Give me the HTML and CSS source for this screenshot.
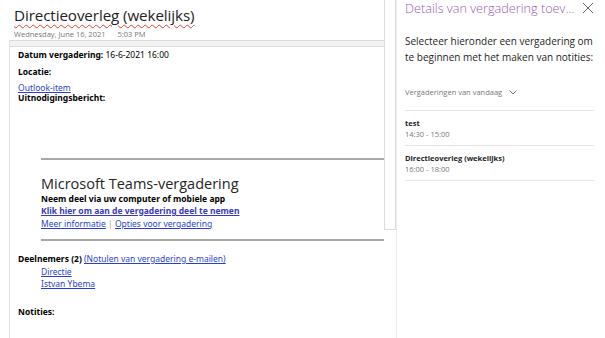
FILE: index.html
```html
<!DOCTYPE html>
<html lang="nl">
<head>
    <meta charset="UTF-8">
    <title>Directieoverleg (wekelijks)</title>
    <link rel="stylesheet" href="styles.css">
</head>
<body>
    <div class="note">
        <div class="note-head">
            <h1 class="note-title">Directieoverleg (wekelijks)</h1>
            <div class="note-date"><span>Wednesday, June 16, 2021</span><span>5:03 PM</span></div>
        </div>
        <div class="page">
            <div class="page-band"></div>
            <div class="page-body">
                <p class="row"><b>Datum vergadering:</b> 16-6-2021 16:00</p>
                <p class="row"><b>Locatie:</b></p>
                <p class="row tight"><a href="#">Outlook-item</a></p>
                <p class="row"><b>Uitnodigingsbericht:</b></p>

                <div class="invite">
                    <hr class="rule">
                    <h2 class="teams-title">Microsoft Teams-vergadering</h2>
                    <p class="teams-line"><b>Neem deel via uw computer of mobiele app</b></p>
                    <p class="teams-line"><a href="#" class="strong-link">Klik hier om aan de vergadering deel te nemen</a></p>
                    <p class="teams-line"><a href="#">Meer informatie</a> <span class="sep">|</span> <a href="#">Opties voor vergadering</a></p>
                    <hr class="rule lower">
                </div>

                <p class="row"><b>Deelnemers (2)</b> <a href="#">(Notulen van vergadering e-mailen)</a></p>
                <ul class="people">
                    <li><a href="#">Directie</a></li>
                    <li><a href="#">Istvan Ybema</a></li>
                </ul>
                <p class="row notes"><b>Notities:</b></p>
            </div>
        </div>
    </div>

    <div class="scroll-track"></div>

    <div class="panel">
        <div class="panel-head">
            <h2 class="panel-title">Details van vergadering toev...</h2>
            <svg class="close" width="12" height="12" viewBox="0 0 12 12"><path d="M1 1 L11 11 M11 1 L1 11" stroke="#666" stroke-width="1" fill="none"/></svg>
        </div>
        <p class="panel-intro">Selecteer hieronder een vergadering om te beginnen met het maken van notities:</p>
        <div class="filter">Vergaderingen van vandaag
            <svg width="8" height="5" viewBox="0 0 8 5"><path d="M0.5 0.5 L4 4 L7.5 0.5" stroke="#777" stroke-width="1" fill="none"/></svg>
        </div>
        <ul class="meetings">
            <li><div class="m-name">test</div><div class="m-time">14:30 - 15:00</div></li>
            <li><div class="m-name">Directieoverleg (wekelijks)</div><div class="m-time">16:00 - 18:00</div></li>
        </ul>
    </div>
</body>
</html>
```

FILE: styles.css
```css
html, body {
    margin: 0;
    padding: 0;
}
body {
    width: 605px;
    height: 338px;
    overflow: hidden;
    display: flex;
    background: #fff;
    font-family: "Open Sans", "Noto Sans", sans-serif;
    color: #000;
}
a {
    color: #2a3fd0;
}
p {
    margin: 0;
}
.note {
    flex: 0 0 384px;
    display: flex;
    flex-direction: column;
}
.note-head {
    padding: 4px 0 0 14px;
    height: 36px;
}
.note-title {
    margin: 0;
    display: inline-block;
    font-size: 15.2px;
    font-weight: 400;
    letter-spacing: -0.1px;
    line-height: 22px;
    color: #222;
    text-decoration: underline wavy #e04040;
    text-decoration-thickness: 1px;
    text-underline-offset: 3px;
}
.note-date {
    margin-top: 3px;
    font-size: 7.5px;
    color: #777;
    display: flex;
    gap: 12px;
}
.page {
    flex: 1;
    margin-left: 9px;
    border-left: 1px solid #e3e3e3;
}
.page-band {
    height: 5px;
    background: #f2f2f2;
    border-top: 1px solid #dcdcdc;
    border-bottom: 1px solid #dcdcdc;
}
.page-body {
    padding: 3px 0 0 8px;
    font-family: "Noto Sans", sans-serif;
    font-size: 8.5px;
    line-height: 10px;
}
.row {
    margin-bottom: 6.5px;
}
.row.tight {
    margin-bottom: 0;
}
.invite {
    padding: 48px 0 0 23px;
}
.rule {
    margin: 0;
    border: 0;
    border-top: 2px solid #a8a8a8;
}
.rule.lower {
    margin-top: 9px;
    margin-bottom: 13px;
}
.teams-title {
    margin: 15px 0 0;
    font-family: "Open Sans", sans-serif;
    font-size: 14.5px;
    font-weight: 400;
    line-height: 18px;
    color: #252424;
}
.teams-line {
    line-height: 12.5px;
}
.strong-link {
    font-weight: 700;
    color: #3b3bb8;
}
.sep {
    color: #999;
}
.people {
    list-style: none;
    margin: -5px 0 0;
    padding: 0 0 0 23px;
    line-height: 12px;
}
.notes {
    margin-top: 17px;
}
.scroll-track {
    flex: 0 0 10px;
    height: 229px;
    border: 1px solid #dcdcdc;
    border-top: 0;
    background: #fff;
}
.panel {
    flex: 1;
    border-left: 1px solid #ececec;
    padding: 0 11px 0 8px;
}
.panel-head {
    display: flex;
    justify-content: space-between;
    align-items: center;
    height: 20px;
    margin-top: -2px;
}
.panel-title {
    margin: 0;
    font-size: 12.7px;
    font-weight: 300;
    color: #9560b0;
    white-space: nowrap;
}
.panel-intro {
    margin: 16px -6px 0 0;
    font-size: 10px;
    line-height: 15.5px;
    color: #252424;
}
.filter {
    margin-top: 22px;
    font-size: 7.5px;
    color: #777;
    display: flex;
    align-items: center;
    gap: 7px;
    padding-bottom: 13px;
    border-bottom: 1px solid #e6e6e6;
}
.meetings {
    list-style: none;
    margin: 0;
    padding: 0;
}
.meetings li {
    padding: 7px 0 6px;
    border-bottom: 1px solid #e6e6e6;
    font-size: 7.5px;
    line-height: 10.5px;
}
.m-name {
    font-weight: 700;
    color: #252424;
}
.m-time {
    color: #777;
}
```
